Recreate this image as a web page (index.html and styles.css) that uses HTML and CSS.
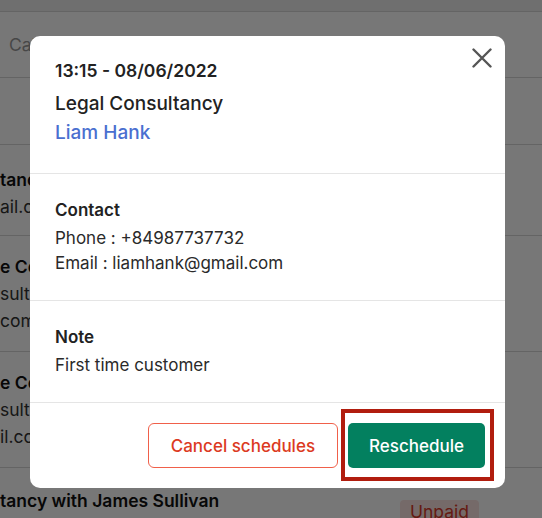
FILE: index.html
```html
<!DOCTYPE html>
<html lang="en">
<head>
    <meta charset="UTF-8" />
    <title>Appointment details</title>
    <link rel="stylesheet" href="styles.css">
</head>
<body>
<div class="page">
    <div class="topbar"></div>
    <div class="tabs"><span>Calendar</span></div>
    <div class="row row-empty"></div>
    <div class="row row-short">
        <div class="row-title">tancy with Liam Hank</div>
        <div class="row-text">ail.com</div>
    </div>
    <div class="row">
        <div class="row-title">e Consultancy with Emma Stone</div>
        <div class="row-text">sultancy</div>
        <div class="row-text">com</div>
    </div>
    <div class="row">
        <div class="row-title">e Consultancy with Noah Brown</div>
        <div class="row-text">sultancy</div>
        <div class="row-text">il.com</div>
    </div>
    <div class="row row-last">
        <div class="row-title">tancy with James Sullivan</div>
        <span class="badge">Unpaid</span>
    </div>
</div>

<div class="overlay"></div>

<div class="modal">
    <button class="close" aria-label="Close">
        <svg width="20" height="20" viewBox="0 0 20 20">
            <path d="M1.5 1.5 L18.5 18.5 M18.5 1.5 L1.5 18.5" stroke="#555" stroke-width="2.4" stroke-linecap="round" fill="none"/>
        </svg>
    </button>

    <div class="modal-head">
        <div class="time">13:15 - 08/06/2022</div>
        <div class="service">Legal Consultancy</div>
        <div class="client">Liam Hank</div>
    </div>

    <div class="modal-section">
        <div class="section-title">Contact</div>
        <div class="line">Phone : +84987737732</div>
        <div class="line">Email : liamhank@gmail.com</div>
    </div>

    <div class="modal-section">
        <div class="section-title">Note</div>
        <div class="line">First time customer</div>
    </div>

    <div class="modal-foot">
        <button class="btn btn-cancel">Cancel schedules</button>
        <button class="btn btn-primary">Reschedule</button>
    </div>
</div>
</body>
</html>
```

FILE: styles.css
```css
body {
    margin: 0;
    font-family: Inter, 'Noto Sans', sans-serif;
    background-color: #ffffff;
    color: #222;
    overflow: hidden;
}

.page {
    width: 542px;
    height: 518px;
    overflow: hidden;
}

.topbar {
    height: 11px;
    background-color: #eeeeee;
    border-bottom: 1px solid #d6d6d6;
}

.tabs {
    height: 65px;
    display: flex;
    align-items: center;
    padding-left: 9px;
    color: #999;
    font-size: 17.5px;
    border-bottom: 1px solid #d6d6d6;
}

.row {
    height: 116px;
    padding: 17px 0 0 0;
    box-sizing: border-box;
    border-bottom: 1px solid #d6d6d6;
}

.row-empty {
    height: 67px;
}

.row-short {
    height: 91px;
    padding-top: 21px;
}

.row-last {
    display: flex;
    justify-content: space-between;
    align-items: flex-start;
    border-bottom: none;
    padding-top: 19px;
}

.row-title {
    font-size: 17.5px;
    font-weight: 600;
    line-height: 27px;
    color: #111;
}

.row-text {
    font-size: 17.5px;
    line-height: 27px;
    color: #333;
}

.badge {
    margin: 13px 63px 0 0;
    padding: 1px 10px;
    background-color: #fbe3e1;
    color: #d83a2a;
    font-size: 17.5px;
    border-radius: 4px;
}

.overlay {
    position: fixed;
    inset: 0;
    background-color: rgba(0, 0, 0, 0.535);
}

.modal {
    position: fixed;
    left: 30px;
    top: 36px;
    width: 475px;
    background-color: white;
    border-radius: 10px;
}

.close {
    position: absolute;
    top: 12px;
    right: 13px;
    width: 20px;
    height: 20px;
    padding: 0;
    border: none;
    background: none;
    cursor: pointer;
}

.modal-head {
    padding: 23px 25px 26px;
    border-bottom: 1px solid #e5e5e5;
}

.time {
    font-size: 17.5px;
    font-weight: 600;
    line-height: 24px;
}

.service {
    margin-top: 7px;
    font-size: 19px;
    font-weight: 500;
    line-height: 28px;
}

.client {
    margin-top: 1px;
    font-size: 19px;
    font-weight: 500;
    line-height: 28px;
    color: #4a6fd0;
}

.modal-section {
    padding: 24px 25px;
    border-bottom: 1px solid #e5e5e5;
}

.section-title {
    font-size: 17px;
    font-weight: 600;
    line-height: 24px;
    margin-bottom: 4px;
}

.line {
    font-size: 17px;
    line-height: 25px;
    color: #2a2a2a;
}

.modal-foot {
    display: flex;
    justify-content: flex-end;
    gap: 10px;
    padding: 20px;
}

.btn {
    height: 45px;
    padding: 0 22px;
    font-family: inherit;
    font-size: 17px;
    font-weight: 500;
    border-radius: 6px;
    cursor: pointer;
}

.btn-cancel {
    background-color: white;
    color: #dc3a22;
    border: 1px solid #f0604a;
}

.btn-primary {
    position: relative;
    padding: 0 21px;
    background-color: #03805f;
    color: white;
    border: none;
    border-radius: 5px;
}

.btn-primary::after {
    content: "";
    position: absolute;
    top: -14px;
    bottom: -13px;
    left: -7px;
    right: -9px;
    border: 4px solid #b11d0e;
}
```
